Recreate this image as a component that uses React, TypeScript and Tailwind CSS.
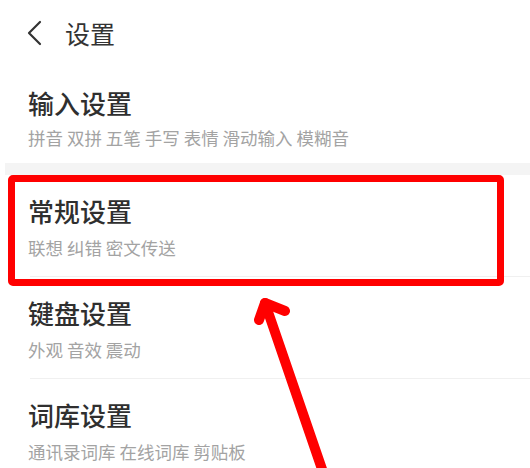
type SettingItem = {
  title: string;
  desc: string;
};

const items: SettingItem[] = [
  { title: "常规设置", desc: "联想 纠错 密文传送" },
  { title: "键盘设置", desc: "外观 音效 震动" },
  { title: "词库设置", desc: "通讯录词库 在线词库 剪贴板" },
];

const font = {
  fontFamily: '"Noto Sans CJK SC", "Noto Sans", sans-serif',
};

function SettingRow({
  item,
  highlighted,
  last,
}: {
  item: SettingItem;
  highlighted?: boolean;
  last?: boolean;
}) {
  return (
    <div className="relative">
      <div className="pl-[28px] pt-[21px]">
        <p className="text-[26px] font-medium leading-[30px] text-[#2f2f2f]">
          {item.title}
        </p>
        <p className="mt-3 text-[17.5px] leading-[20px] text-[#a3a3a3]">
          {item.desc}
        </p>
      </div>
      <div
        className={`ml-[30px] mt-[18px] ${last ? "" : "border-b border-[#f0f0f0]"}`}
      />
      {highlighted ? (
        <div className="pointer-events-none absolute -bottom-[9px] left-[8px] right-[26px] top-0 rounded-[5px] border-[7px] border-[#ff0000]" />
      ) : null}
    </div>
  );
}

export default function App() {
  return (
    <div
      className="relative h-[468px] w-[530px] overflow-hidden bg-white"
      style={font}
    >
      <header className="flex h-[66px] items-center pl-[26px]">
        <svg
          width="16"
          height="26"
          viewBox="0 0 16 26"
          aria-hidden="true"
          className="text-[#333333]"
        >
          <path
            d="M14 2 L3 13 L14 24"
            fill="none"
            stroke="currentColor"
            strokeWidth="2.2"
            strokeLinecap="round"
            strokeLinejoin="round"
          />
        </svg>
        <h1 className="ml-[23px] text-[25px] leading-none text-[#333333]">
          设置
        </h1>
      </header>

      <div className="pl-[28px] pt-[22px]">
        <p className="text-[26px] font-medium leading-[30px] text-[#2f2f2f]">
          输入设置
        </p>
        <p className="mt-[10px] text-[17.5px] leading-[20px] text-[#a3a3a3]">
          拼音 双拼 五笔 手写 表情 滑动输入 模糊音
        </p>
      </div>
      <div className="ml-[5px] mt-[15px] h-[12px] bg-[#f4f4f4]" />

      {items.map((item, index) => (
        <SettingRow
          item={item}
          key={item.title}
          highlighted={index === 0}
          last={index === items.length - 1}
        />
      ))}

      <svg
        className="pointer-events-none absolute inset-0"
        width="530"
        height="468"
        viewBox="0 0 530 468"
        aria-hidden="true"
      >
        <g
          fill="none"
          stroke="#ff0000"
          strokeWidth="10"
          strokeLinecap="round"
          strokeLinejoin="round"
        >
          <path d="M265 303 L323 472" />
          <path d="M259 320 L265 303 L285 311" />
        </g>
      </svg>
    </div>
  );
}
